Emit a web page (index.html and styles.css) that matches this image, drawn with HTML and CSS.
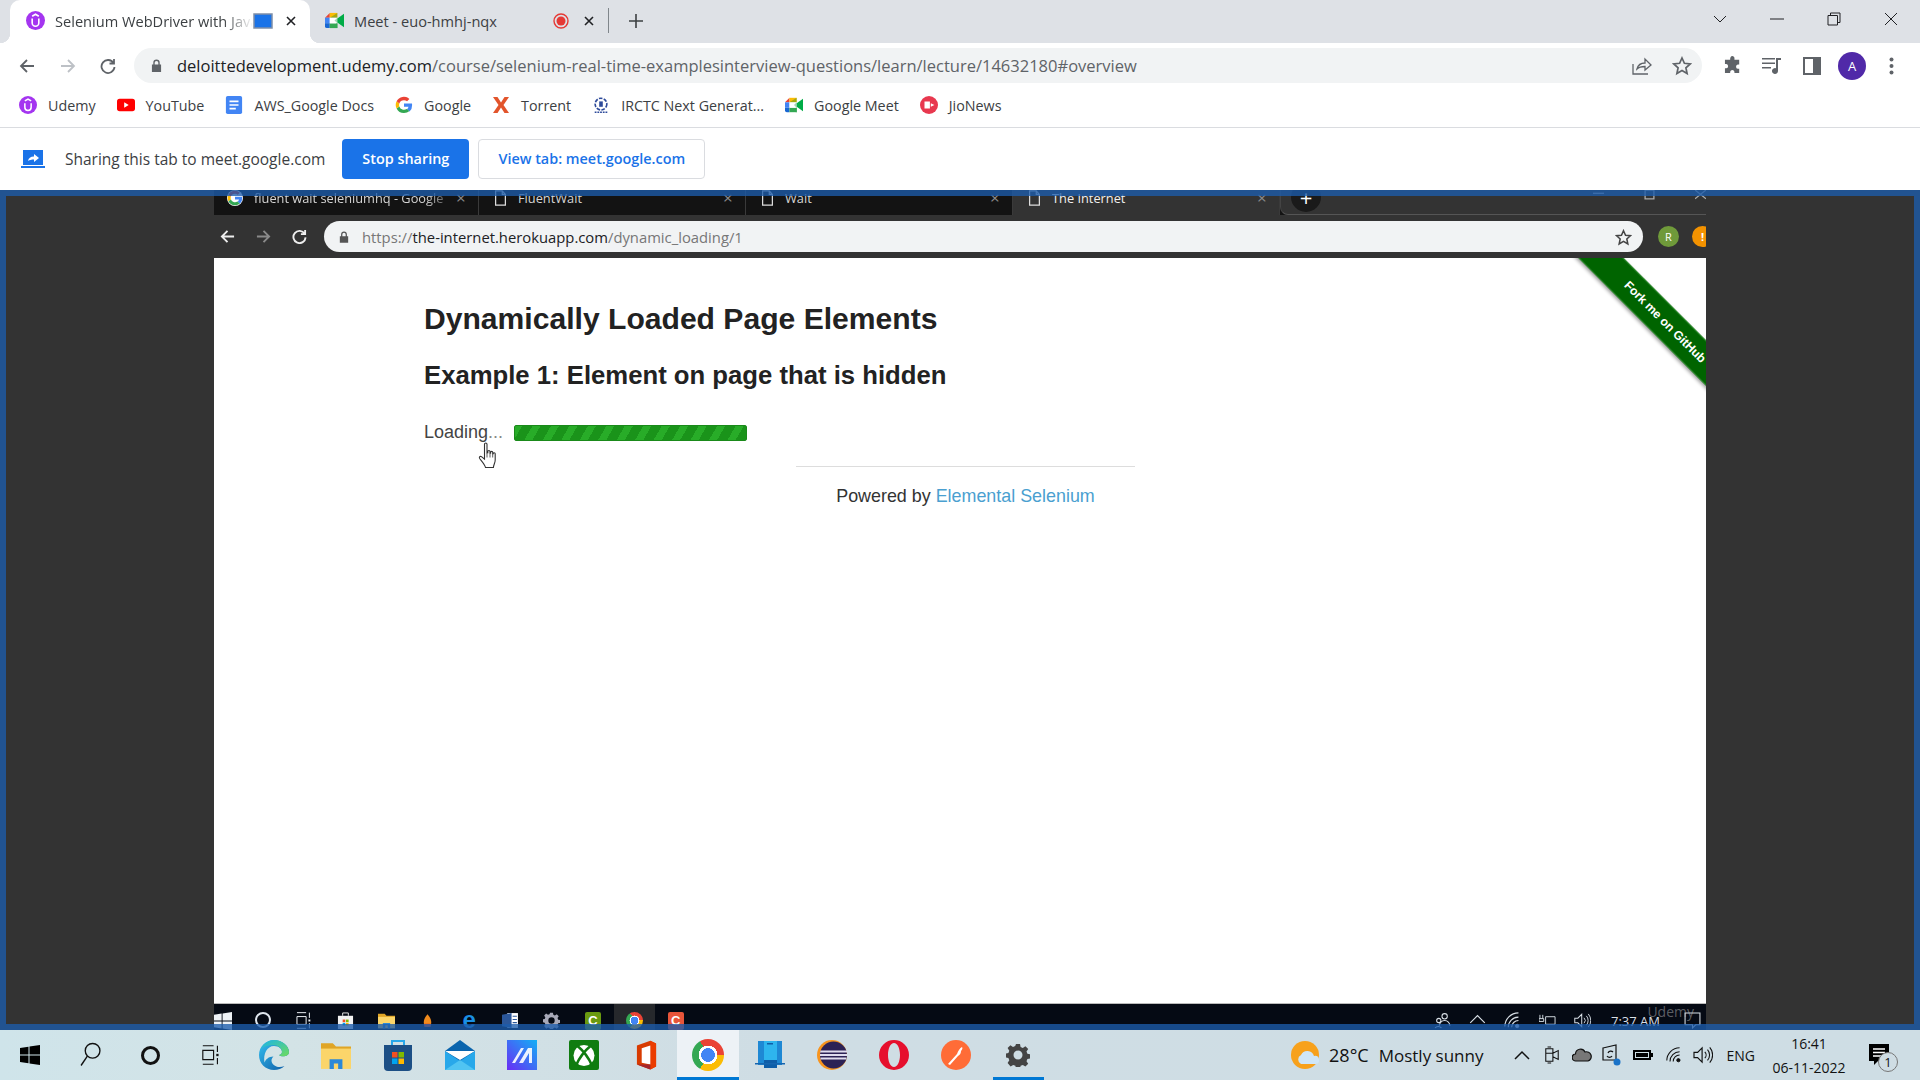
FILE: index.html
```html
<!DOCTYPE html>
<html lang="en">
<head>
<meta charset="UTF-8" />
<title>Selenium WebDriver with Java</title>
<link rel="stylesheet" href="styles.css">
</head>
<body>
    <svg class="sprites" aria-hidden="true">
        <symbol id="udemy" viewBox="0 0 20 20"><circle cx="10" cy="10" r="10" fill="#a435f0"/><path d="M6.500 8v4.500a3.500 3.500 0 0 0 7 0V8M6.500 5.500 10 3.400l3.500 2.100" fill="none" stroke="#fff" stroke-width="1.700"/></symbol>
        <symbol id="meet" viewBox="0 0 20 18"><path d="M5 1v5H0z" fill="#ea4335"/><path d="M5 1h8v5H5z" fill="#fbbc04"/><path d="M0 6h5v6H0z" fill="#4285f4"/><path d="M0 12h5v5H2a2 2 0 0 1-2-2z" fill="#1967d2"/><path d="M5 12h8v5H5z" fill="#34a853"/><path d="M5 6h8v6H5z" fill="#fff"/><path d="M13 1v5H5v0zM13 6v6l-3-3z" fill="#00832d" opacity=".35"/><path d="M13 7l7-5v14l-7-5z" fill="#00ac47"/><path d="M13 12v5l-1 0V12z" fill="#34a853"/></symbol>
        <symbol id="google" viewBox="0 0 20 20"><path d="M19 10.200c0-.7 0-1.300-.2-1.900H10v3.700h5a4.400 4.400 0 0 1-1.800 2.800l3 2.300A9 9 0 0 0 19 10.200z" fill="#4285f4"/><path d="M10 19c2.400 0 4.500-.8 6-2.200l-3-2.300a5.500 5.500 0 0 1-8.200-2.900l-3 2.400A9 9 0 0 0 10 19z" fill="#34a853"/><path d="M4.800 11.600a5.500 5.500 0 0 1 0-3.400l-3-2.300a9 9 0 0 0 0 8.100z" fill="#fbbc05"/><path d="M10 4.600c1.300 0 2.500.5 3.400 1.300L16 3.300A9 9 0 0 0 1.800 5.900l3 2.300A5.400 5.400 0 0 1 10 4.600z" fill="#ea4335"/></symbol>
        <symbol id="docpage" viewBox="0 0 14 18"><path d="M1.500 1H9l3.500 4v12h-11z M9 1v4h3.500" fill="none" stroke="currentColor" stroke-width="1.400"/></symbol>
        <symbol id="gear" viewBox="0 0 24 24"><path d="M10 1h4l.6 3 2.200.9 2.600-1.700 2.800 2.800-1.700 2.600.9 2.200 3 .6v4l-3 .6-.9 2.200 1.700 2.600-2.800 2.800-2.600-1.700-2.200.9-.6 3h-4l-.6-3-2.200-.9-2.600 1.700L1.600 19.900l1.700-2.600-.9-2.200-3-.6v-4l3-.6.9-2.200L1.600 5l2.800-2.800L7 3.900l2.200-.9z M12 7.500a4.500 4.500 0 1 0 0 9 4.500 4.500 0 0 0 0-9z" fill="currentColor" fill-rule="evenodd"/></symbol>
        <symbol id="winlogo" viewBox="0 0 20 20"><path d="M0 3l8.500-1.200v7.700H0zM9.500 1.600 20 0v9.500H9.500zM0 10.500h8.500v7.700L0 17zM9.500 10.500H20V20L9.500 18.400z" fill="currentColor"/></symbol>
        <symbol id="taskview" viewBox="0 0 22 26"><path d="M1 1h14M1 25h14M1 7h14v12H1z" fill="none" stroke="currentColor" stroke-width="1.500"/><path d="M20 1v8M20 17v8" stroke="currentColor" stroke-width="1.500"/><path d="M18.500 11.500h3v3h-3z" fill="currentColor"/></symbol>
        <symbol id="folder" viewBox="0 0 28 28"><path d="M0 3h11l3 3h14v3H0z" fill="#e0a526"/><path d="M0 8h28v19H0z" fill="#fbd56a"/><path d="M8 27v-9h12v9h-4v-5h-4v5z" fill="#2b88d8"/></symbol>
        <symbol id="storebag" viewBox="0 0 28 32"><path d="M8 7V2h12v5" fill="none" stroke="#28a8ea" stroke-width="2"/><path d="M0 6h28v22a4 4 0 0 1-4 4H4a4 4 0 0 1-4-4z" fill="#1c4f85"/><path d="M8 13h5.500v5.500H8z" fill="#f25022"/><path d="M14.500 13H20v5.500h-5.500z" fill="#7fba00"/><path d="M8 19.500h5.500V25H8z" fill="#00a4ef"/><path d="M14.500 19.500H20V25h-5.500z" fill="#ffb900"/></symbol>
        <symbol id="speaker" viewBox="0 0 22 20"><path d="M1 7h4l5-5v16l-5-5H1z" fill="none" stroke="currentColor" stroke-width="1.300"/><path d="M13 6.500a5 5 0 0 1 0 7M16 4a9 9 0 0 1 0 12M18.500 1.500a13 13 0 0 1 0 17" fill="none" stroke="currentColor" stroke-width="1.200"/></symbol>
        <symbol id="wifi" viewBox="0 0 20 20"><path d="M1 17a16 16 0 0 1 16-16M5 18A12 12 0 0 1 17 6M9 18a8 8 0 0 1 8-8" fill="none" stroke="currentColor" stroke-width="1.300"/><circle cx="15.500" cy="16.500" r="2" fill="currentColor"/></symbol>
    </svg>

    <div class="tab-strip">
        <div class="tab active">
            <svg class="favicon"><use href="#udemy"/></svg>
            <span class="tab-title faded">Selenium WebDriver with Java</span>
            <svg class="share-badge" viewBox="0 0 20 16"><rect x="1" y="1" width="18" height="14" fill="#1a73e8" stroke="#7f8fa8" stroke-width="1.500"/></svg>
            <svg class="tab-close" viewBox="0 0 10 10"><path d="M1 1l8 8M9 1l-8 8"/></svg>
        </div>
        <div class="tab">
            <svg class="favicon"><use href="#meet"/></svg>
            <span class="tab-title">Meet - euo-hmhj-nqx</span>
            <svg class="rec-badge" viewBox="0 0 16 16"><circle cx="8" cy="8" r="7" fill="none" stroke="#e53935" stroke-width="1.400"/><circle cx="8" cy="8" r="4.500" fill="#e53935"/></svg>
            <svg class="tab-close" viewBox="0 0 10 10"><path d="M1 1l8 8M9 1l-8 8"/></svg>
        </div>
        <span class="tab-divider"></span>
        <svg class="new-tab" viewBox="0 0 14 14"><path d="M7 0v14M0 7h14"/></svg>
        <div class="win-controls">
            <svg viewBox="0 0 14 8"><path d="M1 1l6 6 6-6"/></svg>
            <svg viewBox="0 0 14 14"><path d="M0 7h14"/></svg>
            <svg viewBox="0 0 14 14"><path d="M1 3.500h9.500V13H1zM3.500 3.500V1H13v9.500h-2.500"/></svg>
            <svg viewBox="0 0 14 14"><path d="M1 1l12 12M13 1L1 13"/></svg>
        </div>
    </div>

    <div class="toolbar">
        <svg class="nav-icon" viewBox="0 0 16 16"><path d="M15 8H2M8 2 2 8l6 6"/></svg>
        <svg class="nav-icon off" viewBox="0 0 16 16"><path d="M1 8h13M8 2l6 6-6 6"/></svg>
        <svg class="nav-icon" viewBox="0 0 16 16"><path d="M13.500 5A6.500 6.500 0 1 0 14.500 9M14 1v4.500H9.500"/></svg>
        <div class="omnibox">
            <svg class="lock" viewBox="0 0 12 14"><path d="M2.500 6V4a3.500 3.500 0 0 1 7 0v2H11v8H1V6zM4 6h4V4a2 2 0 0 0-4 0z" fill-rule="evenodd"/></svg>
            <span class="url"><b>deloittedevelopment.udemy.com</b>/course/selenium-real-time-examplesinterview-questions/learn/lecture/14632180#overview</span>
            <svg class="omni-share" viewBox="0 0 20 18"><path d="M1 7v10h15M5 12c1-4 4-6 8-6V2l6 6-6 5V9.500c-3 0-6 .5-8 2.500z"/></svg>
            <svg class="omni-star" viewBox="0 0 20 20"><path d="M10 2l2.400 5.300 5.800.6-4.300 3.900 1.200 5.700L10 14.600 4.900 17.500l1.200-5.700L1.800 7.900l5.800-.6z"/></svg>
        </div>
        <svg class="tool-icon puzzle" viewBox="0 0 20 20"><path d="M7 1a2.200 2.200 0 0 1 4 1.500V4h5v5h-1.500a2.300 2.300 0 0 0 0 4.500H16V18h-5v-1.500a2.300 2.300 0 0 0-4.500 0V18H1v-5h1.500a2.300 2.300 0 0 0 0-4.500H1V4h5.500V2.500z"/></svg>
        <svg class="tool-icon music" viewBox="0 0 20 18"><path d="M0 1h13v1.600H0zM0 5.500h13v1.600H0zM0 10h9v1.600H0zM14 1h5v2h-3v11a3 3 0 1 1-2-2.800z"/></svg>
        <svg class="tool-icon sidebar" viewBox="0 0 18 18"><path d="M0 0h18v18H0zM2 2v14h8V2z" fill-rule="evenodd"/></svg>
        <span class="avatar">A</span>
        <svg class="tool-icon dots" viewBox="0 0 4 18"><circle cx="2" cy="2.500" r="2"/><circle cx="2" cy="9" r="2"/><circle cx="2" cy="15.500" r="2"/></svg>
    </div>

    <div class="bookmarks">
        <a class="bookmark"><svg><use href="#udemy"/></svg>Udemy</a>
        <a class="bookmark"><svg viewBox="0 0 20 14"><rect width="20" height="14" rx="3" fill="#f00"/><path d="M8 4l5 3-5 3z" fill="#fff"/></svg>YouTube</a>
        <a class="bookmark"><svg viewBox="0 0 18 20"><path d="M0 2a2 2 0 0 1 2-2h14a2 2 0 0 1 2 2v16a2 2 0 0 1-2 2H2a2 2 0 0 1-2-2z" fill="#4285f4"/><path d="M4 6h10M4 10h10M4 14h7" stroke="#fff" stroke-width="1.800"/></svg>AWS_Google Docs</a>
        <a class="bookmark"><svg><use href="#google"/></svg>Google</a>
        <a class="bookmark"><svg viewBox="0 0 18 18"><path d="M1 1h4.500L9 6.500 12.500 1H17l-5.500 8L17 17h-4.500L9 11.500 5.500 17H1l5.500-8z" fill="#e2542b"/></svg>Torrent</a>
        <a class="bookmark"><svg viewBox="0 0 20 20"><circle cx="10" cy="9" r="6.500" fill="none" stroke="#2d4a9a" stroke-width="1.800" stroke-dasharray="4 1.500"/><path d="M8 6h4v6H8z" fill="#2d4a9a"/><path d="M3 18h14" stroke="#2d4a9a" stroke-width="1.500" stroke-dasharray="2 1"/></svg>IRCTC Next Generat...</a>
        <a class="bookmark"><svg><use href="#meet"/></svg>Google Meet</a>
        <a class="bookmark"><svg viewBox="0 0 20 20"><circle cx="10" cy="10" r="10" fill="#e8384f"/><path d="M5 6h6v8H5zM12 8l4 2-4 2z" fill="#fff"/></svg>JioNews</a>
    </div>

    <div class="sharebar">
        <svg class="sharebar-icon" viewBox="0 0 24 18"><path d="M2 0h20v15H2z" fill="#1a73e8"/><path d="M0 16h24v2H0z" fill="#1a73e8"/><path d="M7 11c.5-3 2.500-4.500 6-4.500V4l5 4-5 4V9.500c-2.500 0-4.500.5-6 1.500z" fill="#fff"/></svg>
        <span class="share-text">Sharing this tab to meet.google.com</span>
        <button class="btn primary">Stop sharing</button>
        <button class="btn outline">View tab: meet.google.com</button>
    </div>

    <div class="screen">
        <div class="shot">
            <div class="itabs">
                <div class="itab"><span class="g-logo"><svg><use href="#google"/></svg></span><span class="itab-title faded">fluent wait seleniumhq - Google</span><span class="itab-x">×</span></div>
                <div class="itab"><svg class="idoc"><use href="#docpage"/></svg><span class="itab-title">FluentWait</span><span class="itab-x">×</span></div>
                <div class="itab"><svg class="idoc"><use href="#docpage"/></svg><span class="itab-title">Wait</span><span class="itab-x">×</span></div>
                <div class="itab current"><svg class="idoc"><use href="#docpage"/></svg><span class="itab-title">The Internet</span><span class="itab-x">×</span></div>
                <div class="itab-rest">
                    <span class="inew">+</span>
                    <div class="iwin">
                        <svg viewBox="0 0 10 10"><path d="M0 3h10"/></svg>
                        <svg viewBox="0 0 10 10"><path d="M1 0h8v8H1z"/></svg>
                        <svg viewBox="0 0 10 10"><path d="M0 0l10 8M10 0L0 8"/></svg>
                    </div>
                </div>
            </div>
            <div class="itoolbar">
                <svg class="inav" viewBox="0 0 16 16"><path d="M15 8H2M8 2 2 8l6 6"/></svg>
                <svg class="inav off" viewBox="0 0 16 16"><path d="M1 8h13M8 2l6 6-6 6"/></svg>
                <svg class="inav" viewBox="0 0 16 16"><path d="M13.500 5A6.500 6.500 0 1 0 14.500 9M14 1v4.500H9.500"/></svg>
                <div class="iomni">
                    <svg class="ilock" viewBox="0 0 12 14"><path d="M2.500 6V4a3.500 3.500 0 0 1 7 0v2H11v8H1V6zM4 6h4V4a2 2 0 0 0-4 0z" fill-rule="evenodd"/></svg>
                    <span class="iurl">https://<b>the-internet.herokuapp.com</b>/dynamic_loading/1</span>
                    <svg class="istar" viewBox="0 0 20 20"><path d="M10 2l2.400 5.300 5.800.6-4.300 3.900 1.200 5.700L10 14.600 4.900 17.500l1.200-5.700L1.800 7.900l5.800-.6z"/></svg>
                </div>
                <span class="iavatar green">R</span>
                <span class="iavatar orange">!</span>
            </div>
            <div class="page">
                <h1>Dynamically Loaded Page Elements</h1>
                <h2>Example 1: Element on page that is hidden</h2>
                <div class="loading">
                    <span class="loading-text">Loading<i>...</i></span>
                    <span class="progress"></span>
                </div>
                <div class="page-footer">Powered by <a>Elemental Selenium</a></div>
                <div class="ribbon">Fork me on GitHub</div>
                <svg class="hand" viewBox="0 0 20 27"><path d="M6.500 2.200c0-1.600 2.500-1.600 2.500 0V11l.8-.2V9.600c0-1.400 2.200-1.400 2.200 0v1.500h.6v-.8c0-1.300 2.100-1.300 2.100 0v1.300h.5c0-1.100 2-1.100 2 .2v6.200c0 3-1.500 4.200-1.800 7.500H7.500c-.6-2.700-2.500-4.800-5.500-8.500-1.500-2-.1-3.300 1.500-2.300l3 2.500z" fill="#fff" stroke="#333" stroke-width="1.100"/><path d="M9 11.500v4M12 11.500v4M14.700 12v3.500" stroke="#333" stroke-width=".8"/></svg>
            </div>
            <div class="itaskbar">
                <svg class="ti ti-first light"><use href="#winlogo"/></svg>
                <span class="ti-cell"><span class="ring"></span></span>
                <span class="ti-cell"><svg class="ti light"><use href="#taskview"/></svg></span>
                <span class="ti-cell"><svg class="ti" viewBox="0 0 16 18"><path d="M5 4V1h6v3" fill="none" stroke="#eee"/><path d="M0 4h16v14H0z" fill="#f2f2f2"/><path d="M5 8h2.800v2.800H5z" fill="#f25022"/><path d="M8.500 8h2.800v2.800H8.500z" fill="#7fba00"/><path d="M5 11.500h2.800v2.800H5z" fill="#00a4ef"/><path d="M8.500 11.500h2.800v2.800H8.500z" fill="#ffb900"/></svg></span>
                <span class="ti-cell"><svg class="ti"><use href="#folder"/></svg></span>
                <span class="ti-cell"><svg class="ti" viewBox="0 0 16 16"><path d="M8 2c2.500 3 3.500 5 3.500 8a3.500 3.500 0 0 1-7 0c0-3 1-5 3.500-8z" fill="#f08a1c"/><path d="M5 11h6v3H5z" fill="#e64a19"/></svg></span>
                <span class="ti-cell"><span class="ie-e">e</span></span>
                <span class="ti-cell"><svg class="ti" viewBox="0 0 16 16"><path d="M5 1h10v14H5z" fill="#fff"/><path d="M0 2.500 9 1v14L0 13.500z" fill="#2b579a"/><path d="M10 4h4M10 7h4M10 10h4" stroke="#2b579a"/></svg></span>
                <span class="ti-cell"><svg class="ti gear-small"><use href="#gear"/></svg></span>
                <span class="ti-cell"><span class="ti-square camtasia">C</span></span>
                <span class="ti-cell on"><span class="chrome-logo small"></span></span>
                <span class="ti-cell"><span class="ti-square orange-c">C</span></span>
                <div class="itray">
                    <svg class="tray-s" viewBox="0 0 16 16"><circle cx="10" cy="4" r="2.500"/><path d="M5 13a5 5 0 0 1 10 0"/><circle cx="4.500" cy="8" r="2"/><path d="M1 15a4 4 0 0 1 6 0"/></svg>
                    <svg class="tray-s" viewBox="0 0 14 14"><path d="M1 9l6-6 6 6"/></svg>
                    <svg class="tray-s"><use href="#wifi"/></svg>
                    <svg class="tray-s" viewBox="0 0 18 14"><path d="M7 3h10v8H7z"/><path d="M1 1v4M4 1v4M0 5h5v3H0z"/></svg>
                    <svg class="tray-s"><use href="#speaker"/></svg>
                    <span class="itime">7:37 AM</span>
                    <svg class="tray-s inote" viewBox="0 0 16 16"><path d="M1 1h14v11h-4l-3 3v-3H1z"/></svg>
                </div>
                <span class="watermark">Udemy</span>
            </div>
        </div>
        <div class="share-frame"></div>
    </div>

    <div class="taskbar">
        <span class="tb-cell narrow"><svg class="tb-win"><use href="#winlogo"/></svg></span>
        <span class="tb-cell narrow"><svg class="tb-search" viewBox="0 0 20 24"><circle cx="12" cy="8" r="7" /><path d="M7 13 1 22"/></svg></span>
        <span class="tb-cell narrow"><span class="cortana"></span></span>
        <span class="tb-cell narrow"><svg class="tb-task"><use href="#taskview"/></svg></span>
        <span class="tb-spacer"></span>
        <span class="tb-cell"><svg class="tb-icon" viewBox="0 0 30 30">
            <defs><linearGradient id="edgeA" x1="0" y1="0" x2="1" y2="1"><stop offset="0" stop-color="#35c1f1"/><stop offset="1" stop-color="#0c59a4"/></linearGradient><linearGradient id="edgeB" x1="0" y1="0" x2="1" y2="1"><stop offset="0" stop-color="#1bb4e8"/><stop offset="1" stop-color="#6fdc5c"/></linearGradient></defs>
            <path d="M15 0C7 0 0 6.500 0 15c0 8.500 6.500 15 15 15 4 0 8-1.500 10.500-4-7 3-13-1-13-5.500 0-2 1-3 2-4-5 0-8 3-9 6C4 14 8 6 15 6c5 0 8 3 8 6 0 2-2 3-3 3 2 2 10 2 10-3C30 6 23 0 15 0z" fill="url(#edgeA)"/>
            <path d="M2 9C5 3 10 0 15 0c8 0 15 6 15 12 0 5-8 5-10 3 1 0 3-1 3-3 0-4-4-7-9-7-5 0-9 1-12 4z" fill="url(#edgeB)"/>
        </svg></span>
        <span class="tb-cell"><svg class="tb-icon"><use href="#folder"/></svg></span>
        <span class="tb-cell"><svg class="tb-icon tall"><use href="#storebag"/></svg></span>
        <span class="tb-cell"><svg class="tb-icon tall" viewBox="0 0 30 30"><path d="M15 0l15 11v19H0V11z" fill="#0a64ad"/><path d="M0 11h30L15 20z" fill="#fff"/><path d="M0 11l15 10 15-10v19H0z" fill="#28a8ea"/><path d="M0 30l15-10 15 10z" fill="#50c4f2"/></svg></span>
        <span class="tb-cell"><svg class="tb-icon" viewBox="0 0 30 30"><defs><linearGradient id="mayaBg" x1="0" y1="1" x2="1" y2="0"><stop offset="0" stop-color="#6a2cf5"/><stop offset="1" stop-color="#12b0f5"/></linearGradient></defs><rect width="30" height="30" fill="url(#mayaBg)"/><path d="M5 23 14 8h3L8 23zM12 23 21 8h4v15h-3V13l-6 10z" fill="#fff" opacity=".9"/></svg></span>
        <span class="tb-cell"><svg class="tb-icon" viewBox="0 0 30 30"><rect width="30" height="30" rx="2" fill="#107c10"/><circle cx="15" cy="15.500" r="10.500" fill="#fff"/><path d="M8 5.500C11 8 19 16 23 25.500M22 5.500C19 8 11 16 7 25.500" fill="none" stroke="#107c10" stroke-width="2.600"/></svg></span>
        <span class="tb-cell"><svg class="tb-office" viewBox="0 0 24 30"><path d="M2 5 16 0l6 3v24l-6 3-14-5z" fill="#d83b01"/><path d="M16 0l6 3v24l-6 3z" fill="#eb3c00"/><path d="M7 8l9-3v20l-9-2z" fill="#fff"/><path d="M2 25l14 5v-5z" fill="#a4262c"/></svg></span>
        <span class="tb-cell active"><span class="chrome-logo"></span></span>
        <span class="tb-cell"><svg class="tb-icon" viewBox="0 0 30 30"><path d="M3 1h24v24H3z" fill="#1e88d4"/><path d="M9 1h13v27H9z" fill="#2eb5ee"/><path d="M9 20h13v8H9z" fill="#0f5ea8"/><path d="M0 23h30v1.500H0z" fill="#1666b0"/><path d="M12 3h6v1.500h-6z" fill="#0f5ea8"/></svg></span>
        <span class="tb-cell"><svg class="tb-icon" viewBox="0 0 30 30"><circle cx="15" cy="15" r="15" fill="#f7941e"/><circle cx="16.500" cy="15" r="13.500" fill="#2c2255"/><path d="M3.500 10.500h26.500v2H3zM3 14h27v2H3zM3.500 17.500h26v2H3.500z" fill="#e0ddee"/></svg></span>
        <span class="tb-cell"><svg class="tb-icon" viewBox="0 0 30 30"><path d="M15 0a15 15 0 1 0 0 30 15 15 0 0 0 0-30zm0 3c3.500 0 6 5.500 6 12s-2.500 12-6 12-6-5.500-6-12 2.500-12 6-12z" fill="#e60f2d" fill-rule="evenodd"/></svg></span>
        <span class="tb-cell"><svg class="tb-icon" viewBox="0 0 30 30"><circle cx="15" cy="15" r="15" fill="#ff6c37"/><path d="M7 24 16 14c1-3 3-6 5-7 1 1 0 3-1 4 0 2-1 4-3 5l-8 9z" fill="#fff"/></svg></span>
        <span class="tb-cell running"><svg class="tb-icon tb-gear"><use href="#gear"/></svg></span>
        <div class="tray">
            <svg class="weather" viewBox="0 0 28 30"><circle cx="14" cy="15" r="14" fill="#f7a11c"/><path d="M10 24a5 5 0 0 1 0-9 7 7 0 0 1 13 1 4 4 0 0 1 2 8z" fill="#cfe6f7"/></svg>
            <span class="temp">28°C</span>
            <span class="sky">Mostly sunny</span>
            <svg class="tray-i chev" viewBox="0 0 16 10"><path d="M1 9l7-7 7 7"/></svg>
            <svg class="tray-i cam" viewBox="0 0 18 20"><path d="M2 3h8v14H2zM4 1h4M4 19h4M10 8l6-3v10l-6-3M2 8h8"/></svg>
            <svg class="tray-i cloud" viewBox="0 0 20 14"><path d="M4 13a3.500 3.500 0 0 1-.5-7A5 5 0 0 1 13 4a4.500 4.500 0 0 1 3 9z" fill="#777"/></svg>
            <svg class="tray-i sync" viewBox="0 0 20 22"><path d="M1 4l13-3v15H1z"/><path d="M6 9a3 3 0 0 1 5-1M10 12a3 3 0 0 1-5 0"/><circle cx="15" cy="18" r="3.500" fill="#1a73c8" stroke="none"/></svg>
            <svg class="tray-i batt" viewBox="0 0 20 12"><path d="M0 1h18v10H0z" fill="#000"/><path d="M2 3h14v6H2z" fill="#cfe0e6"/><path d="M3 4h12v4H3z" fill="#000"/><path d="M18 4h2v4h-2z" fill="#000"/></svg>
            <svg class="tray-i wifi-i"><use href="#wifi"/></svg>
            <svg class="tray-i spk"><use href="#speaker"/></svg>
            <span class="lang">ENG</span>
            <span class="clock"><span>16:41</span><span>06-11-2022</span></span>
            <span class="notif">
                <svg viewBox="0 0 20 22"><path d="M0 0h20v17H9l-4 4v-4H0z" fill="#000"/><path d="M4 5h12M4 8.500h12M4 12h12" stroke="#fff" stroke-width="1.300"/></svg>
                <span class="notif-count">1</span>
            </span>
        </div>
    </div>
</body>
</html>
```

FILE: styles.css
```css
* {
    box-sizing: border-box;
}

html, body {
    height: 100%;
}

body {
    margin: 0;
    width: 1920px;
    height: 1080px;
    overflow: hidden;
    display: flex;
    flex-direction: column;
    font-family: "Open Sans", "Noto Sans", sans-serif;
    color: #3c4043;
    background: #fff;
}

.sprites {
    display: none;
}

/* Browser tabs */
.tab-strip {
    height: 43px;
    flex: none;
    display: flex;
    align-items: center;
    padding-left: 10px;
    background: #dee1e6;
}

.tab {
    width: 298px;
    height: 43px;
    flex: none;
    display: flex;
    align-items: center;
    padding: 0 9px 2px 15px;
    font-size: 14.6px;
    position: relative;
}

.tab.active {
    width: 300px;
    background: #fff;
    border-radius: 10px 10px 0 0;
    padding-left: 16px;
}

.tab.active::before,
.tab.active::after {
    content: "";
    position: absolute;
    bottom: 0;
    width: 10px;
    height: 10px;
}

.tab.active::before {
    left: -10px;
    background: radial-gradient(circle at 0 0, #dee1e6 10px, #fff 10.5px);
}

.tab.active::after {
    right: -10px;
    background: radial-gradient(circle at 100% 0, #dee1e6 10px, #fff 10.5px);
}

.favicon {
    width: 19px;
    height: 19px;
    flex: none;
}

.tab-title {
    flex: 1;
    margin-left: 10px;
    white-space: nowrap;
    overflow: hidden;
}

.faded {
    -webkit-mask-image: linear-gradient(to right, #000 85%, transparent);
    mask-image: linear-gradient(to right, #000 85%, transparent);
}

.share-badge {
    width: 20px;
    height: 16px;
    flex: none;
    margin-right: 13px;
}

.rec-badge {
    width: 16px;
    height: 16px;
    flex: none;
    margin-right: 15px;
}

.tab-close {
    width: 10px;
    height: 10px;
    flex: none;
    margin-right: 5px;
    fill: none;
    stroke: #202124;
    stroke-width: 1.600;
}

.tab-divider {
    width: 1px;
    height: 25px;
    flex: none;
    background: #80868b;
    margin-bottom: 2px;
}

.new-tab {
    width: 14px;
    height: 14px;
    flex: none;
    margin: 0 0 1px 20px;
    fill: none;
    stroke: #3c4043;
    stroke-width: 1.600;
}

.win-controls {
    margin: 0 0 5px auto;
    display: flex;
    align-items: center;
    gap: 43px;
    padding-right: 22px;
}

.win-controls svg {
    width: 14px;
    height: 14px;
    fill: none;
    stroke: #202124;
    stroke-width: 1;
}

/* Address bar */
.toolbar {
    height: 42px;
    flex: none;
    display: flex;
    align-items: center;
    background: #fff;
    padding: 3px 0 0 19px;
}

.nav-icon {
    width: 16px;
    height: 16px;
    flex: none;
    margin-right: 25px;
    fill: none;
    stroke: #5f6368;
    stroke-width: 1.800;
}

.nav-icon:nth-child(3) {
    margin-left: -1px;
}

.nav-icon.off {
    stroke: #bdc1c6;
}

.omnibox {
    width: 1568px;
    height: 35px;
    flex: none;
    margin-left: -7px;
    border-radius: 18px;
    background: #f1f3f4;
    display: flex;
    align-items: center;
    padding-left: 17px;
    font-size: 16.5px;
    color: #5f6368;
}

.omnibox .url {
    margin-left: 15px;
    white-space: nowrap;
}

.url b,
.iurl b {
    font-weight: 400;
    color: #202124;
}

.lock {
    width: 11px;
    height: 13px;
    flex: none;
    fill: #5f6368;
}

.omni-share {
    width: 20px;
    height: 18px;
    margin-left: auto;
    fill: none;
    stroke: #5f6368;
    stroke-width: 1.300;
}

.omni-star {
    width: 20px;
    height: 20px;
    margin-left: 20px;
    margin-right: 10px;
    fill: none;
    stroke: #5f6368;
    stroke-width: 1.700;
}

.tool-icon {
    flex: none;
    fill: #5f6368;
}

.puzzle {
    width: 19px;
    height: 19px;
    margin-left: 22px;
}

.music {
    width: 20px;
    height: 18px;
    margin-left: 19px;
}

.sidebar {
    width: 18px;
    height: 18px;
    margin-left: 21px;
}

.avatar {
    width: 28px;
    height: 28px;
    flex: none;
    margin-left: 17px;
    border-radius: 50%;
    background: #5029a8;
    color: #fff;
    font-size: 13px;
    display: flex;
    align-items: center;
    justify-content: center;
}

.dots {
    width: 5px;
    height: 18px;
    margin-left: 23px;
}

/* Bookmarks */
.bookmarks {
    height: 43px;
    flex: none;
    display: flex;
    align-items: center;
    gap: 21px;
    padding: 0 0 2px 19px;
    font-size: 14.3px;
    border-bottom: 1px solid #dadce0;
    background: #fff;
}

.bookmark {
    display: flex;
    align-items: center;
    gap: 11px;
    white-space: nowrap;
}

.bookmark svg {
    width: 18px;
    height: 18px;
    flex: none;
}

/* Tab sharing infobar */
.sharebar {
    height: 62px;
    flex: none;
    display: flex;
    align-items: center;
    padding: 0 0 1px 21px;
    background: #fff;
}

.sharebar-icon {
    width: 24px;
    height: 18px;
    flex: none;
}

.share-text {
    margin-left: 20px;
    font-size: 15.5px;
    white-space: nowrap;
}

.btn {
    height: 40px;
    font: 600 14.4px "Open Sans", sans-serif;
    border-radius: 4px;
    cursor: pointer;
}

.btn.primary {
    width: 127px;
    margin-left: 17px;
    border: none;
    background: #1a73e8;
    color: #fff;
}

.btn.outline {
    width: 227px;
    margin-left: 9px;
    border: 1px solid #dadce0;
    background: #fff;
    color: #1a73e8;
}

/* Captured screen */
.screen {
    height: 840px;
    flex: none;
    position: relative;
    background: #333;
    overflow: hidden;
}

.share-frame {
    position: absolute;
    inset: 0;
    border: 6px solid rgba(28, 92, 172, 0.78);
    pointer-events: none;
}

.shot {
    width: 1492px;
    height: 100%;
    margin: 0 auto;
    display: flex;
    flex-direction: column;
    background: #fff;
}

.itabs {
    height: 25px;
    flex: none;
    display: flex;
    background: #131313;
    color: #d5d5d5;
    font-size: 12.8px;
}

.itab {
    width: 267px;
    height: 25px;
    flex: none;
    display: flex;
    padding: 1px 0 0 15px;
    line-height: 14px;
    border-right: 1px solid #3a3a3a;
    overflow: hidden;
}

.itab:first-child {
    width: 265px;
    padding-left: 13px;
}

.itab.current {
    background: #333;
    color: #f0f0f0;
}

.idoc {
    width: 13px;
    height: 16px;
    flex: none;
    color: #ddd;
    margin-top: -1px;
}

.itab-title {
    flex: 1;
    margin-left: 11px;
    white-space: nowrap;
    overflow: hidden;
}

.itab-x {
    flex: none;
    width: 16px;
    margin-right: 6px;
    color: #8a8a8a;
    font-size: 17px;
    line-height: 14px;
}

.chrome-logo {
    width: 32px;
    height: 32px;
    flex: none;
    display: block;
    border-radius: 50%;
    background:
        radial-gradient(circle, #4285f4 0 30%, #fff 31% 41%, transparent 42%),
        conic-gradient(#ea4335 0 90deg, #fbbc05 90deg 210deg, #34a853 210deg 330deg, #ea4335 330deg);
}

.chrome-logo.small {
    width: 17px;
    height: 17px;
}

.g-logo {
    width: 16px;
    height: 16px;
    flex: none;
    border-radius: 50%;
    background: #fff;
    margin-top: -1px;
}

.g-logo svg {
    width: 16px;
    height: 16px;
    display: block;
}

.itab-rest {
    flex: 1;
    display: flex;
    background: #333;
    border-bottom: 1px solid #555;
    border-left: 1px solid #444;
    border-radius: 0 0 0 8px;
}

.inew {
    width: 30px;
    height: 30px;
    margin: -8px 0 0 10px;
    border-radius: 50%;
    background: #1a1a1a;
    color: #fff;
    font-size: 22px;
    line-height: 30px;
    text-align: center;
}

.iwin {
    margin-left: auto;
    display: flex;
    gap: 40px;
}

.iwin svg {
    width: 11px;
    height: 11px;
    fill: none;
    stroke: #aaa;
    stroke-width: 1.200;
}

.itoolbar {
    height: 43px;
    flex: none;
    display: flex;
    align-items: center;
    background: #333;
    padding-left: 6px;
    overflow: hidden;
}

.inav {
    width: 15px;
    height: 15px;
    flex: none;
    margin-right: 21px;
    fill: none;
    stroke: #eee;
    stroke-width: 2;
}

.inav.off {
    stroke: #8a8a8a;
}

.iomni {
    width: 1319px;
    height: 31px;
    flex: none;
    margin-left: -4px;
    border-radius: 16px;
    background: #f1f3f4;
    display: flex;
    align-items: center;
    padding: 1px 0 0 15px;
    font-size: 14.8px;
    color: #777;
}

.ilock {
    width: 10px;
    height: 12px;
    flex: none;
    fill: #555;
}

.iurl {
    margin-left: 13px;
    white-space: nowrap;
}

.istar {
    width: 17px;
    height: 17px;
    margin-left: auto;
    margin-right: 11px;
    fill: none;
    stroke: #444;
    stroke-width: 1.800;
}

.iavatar {
    width: 21px;
    height: 21px;
    flex: none;
    border-radius: 50%;
    color: #fff;
    font-size: 11px;
    text-align: center;
    line-height: 21px;
}

.iavatar.green {
    margin-left: 15px;
    background: #6f9a3a;
}

.iavatar.orange {
    margin-left: 13px;
    background: #f39200;
    font-weight: 700;
}

/* Recorded page */
.page {
    flex: 1;
    position: relative;
    overflow: hidden;
    padding: 41px 0 0 210px;
    background: #fff;
    font-family: "Liberation Sans", Arial, sans-serif;
    color: #222;
}

.page h1 {
    margin: 0;
    font-size: 30.1px;
    line-height: 40px;
    font-weight: 700;
}

.page h2 {
    margin: 19px 0 0;
    font-size: 25.700px;
    line-height: 34px;
    font-weight: 700;
}

.loading {
    display: flex;
    align-items: center;
    gap: 12px;
    margin-top: 28px;
    height: 24px;
}

.loading-text {
    width: 78px;
    font-size: 18px;
    color: #444;
}

.loading-text i {
    font-style: normal;
    color: #888;
}

.progress {
    width: 233px;
    height: 16px;
    margin-top: 1px;
    border-radius: 2px;
    background: repeating-linear-gradient(-60deg, #1a931a 0 9px, #28ac28 9px 16px);
    border: 1px solid #1a8a1a;
}

.page-footer {
    width: 339px;
    margin: 22px 0 0 372px;
    padding-top: 18px;
    line-height: 22px;
    font-size: 17.900px;
    text-align: center;
    border-top: 1px solid #ddd;
    color: #333;
}

.page-footer a {
    color: #4a9fd0;
}

.ribbon {
    position: absolute;
    top: 48px;
    right: -89px;
    width: 260px;
    height: 32px;
    transform: rotate(45deg);
    background: #006400;
    border-top: 1px solid #2f8a2f;
    border-bottom: 1px solid #2f8a2f;
    box-shadow: 0 2px 4px rgba(0, 0, 0, 0.4);
    color: #fff;
    font-size: 12.200px;
    font-weight: 700;
    line-height: 30px;
    text-align: center;
}

.hand {
    position: absolute;
    left: 264px;
    top: 184px;
    width: 20px;
    height: 27px;
}

/* Recorded taskbar */
.itaskbar {
    height: 27px;
    flex: none;
    position: relative;
    display: flex;
    align-items: flex-start;
    background: #050a14;
    border-top: 1px solid #bbb;
    overflow: hidden;
}

.ti {
    width: 17px;
    height: 17px;
    display: block;
}

.ti-first {
    width: 18px;
    height: 18px;
    margin: 8px 10px 0 0;
    flex: none;
}

.light {
    color: #eef2f6;
}

.ti-cell {
    width: 41.300px;
    height: 26px;
    flex: none;
    display: flex;
    justify-content: center;
    padding-top: 8px;
}

.ti-cell.on {
    background: #26282c;
}

.ring {
    width: 16px;
    height: 16px;
    border: 2px solid #dfe6ee;
    border-radius: 50%;
}

.ie-e {
    color: #1a8fe3;
    font: 700 24px/16px "Liberation Sans", sans-serif;
}

.gear-small {
    color: #a7a9b8;
}

.ti-square {
    width: 16px;
    height: 18px;
    border-radius: 2px;
    color: #fff;
    font: 700 13px/18px "Liberation Sans", sans-serif;
    text-align: center;
}

.camtasia {
    background: #6a9a10;
}

.orange-c {
    background: #e8553a;
}

.itray {
    margin-left: auto;
    display: flex;
    align-items: flex-start;
    padding: 8px 5px 0 0;
    color: #d8dfe6;
}

.tray-s {
    width: 17px;
    height: 17px;
    margin-right: 18px;
    flex: none;
    fill: none;
    stroke: currentColor;
    color: #d8dfe6;
}

.itime {
    font-size: 13px;
    line-height: 18px;
    width: 73px;
    margin-left: 2px;
    white-space: nowrap;
}

.inote {
    margin-right: 0;
}

.watermark {
    position: absolute;
    right: 12px;
    top: 0;
    font-size: 14px;
    line-height: 16px;
    color: rgba(200, 200, 200, 0.45);
}

/* Windows taskbar */
.taskbar {
    height: 50px;
    flex: none;
    display: flex;
    align-items: stretch;
    background: linear-gradient(90deg, #cfe4ea 0%, #d3e3e6 15%, #cfdde4 40%, #cedde4 100%);
    color: #111;
}

.tb-cell {
    width: 62px;
    flex: none;
    display: flex;
    align-items: center;
    justify-content: center;
    border-bottom: 3px solid transparent;
    padding-top: 3px;
}

.tb-cell.narrow {
    width: 60px;
}

.tb-spacer {
    width: 3px;
    flex: none;
}

.tb-cell.active {
    background: #edf2f6;
    border-bottom-color: #0078d4;
}

.tb-cell.running {
    position: relative;
}

.tb-cell.running::after {
    content: "";
    position: absolute;
    left: 6px;
    right: 5px;
    bottom: -3px;
    height: 3px;
    background: #0078d4;
}

.tb-win {
    width: 20px;
    height: 20px;
    color: #000;
}

.tb-search {
    width: 21px;
    height: 26px;
    fill: none;
    stroke: #111;
    stroke-width: 1.300;
}

.cortana {
    width: 19px;
    height: 19px;
    border: 3px solid #111;
    border-radius: 50%;
}

.tb-task {
    width: 21px;
    height: 20px;
    color: #111;
}

.tb-icon {
    width: 30px;
    height: 30px;
    display: block;
}

.tb-icon.tall {
    width: 30px;
    height: 32px;
}

.tb-office {
    width: 23px;
    height: 30px;
    display: block;
}

.tb-gear {
    width: 24px;
    height: 24px;
    color: #444;
}

.tray {
    margin-left: auto;
    display: flex;
    align-items: center;
}

.weather {
    width: 28px;
    height: 30px;
    flex: none;
}

.temp {
    margin-left: 10px;
    font-size: 18px;
}

.sky {
    margin-left: 10px;
    font-size: 17px;
}

.tray-i {
    flex: none;
    fill: none;
    stroke: #111;
    stroke-width: 1.200;
}

.chev {
    width: 16px;
    height: 10px;
    margin-left: 30px;
    stroke-width: 1.500;
}

.cam {
    width: 16px;
    height: 18px;
    margin-left: 14px;
}

.cloud {
    width: 20px;
    height: 14px;
    margin-left: 12px;
}

.sync {
    width: 20px;
    height: 22px;
    margin-left: 10px;
}

.batt {
    width: 20px;
    height: 12px;
    margin-left: 11px;
    stroke: none;
}

.wifi-i {
    width: 16px;
    height: 16px;
    margin-left: 13px;
    color: #111;
}

.spk {
    width: 20px;
    height: 18px;
    margin-left: 11px;
    color: #111;
}

.lang {
    margin-left: 14px;
    font-size: 14px;
}

.clock {
    width: 82px;
    margin-left: 13px;
    display: flex;
    flex-direction: column;
    align-items: center;
    gap: 5px;
    font-size: 14px;
    line-height: 19px;
}

.notif {
    width: 36px;
    margin-left: 19px;
    margin-right: 15px;
    position: relative;
    flex: none;
}

.notif svg {
    width: 20px;
    height: 22px;
    display: block;
}

.notif-count {
    position: absolute;
    left: 9px;
    top: 8px;
    width: 20px;
    height: 20px;
    border: 1px solid #777;
    border-radius: 50%;
    background: #cfdde4;
    font-size: 13px;
    line-height: 18px;
    text-align: center;
}
```
